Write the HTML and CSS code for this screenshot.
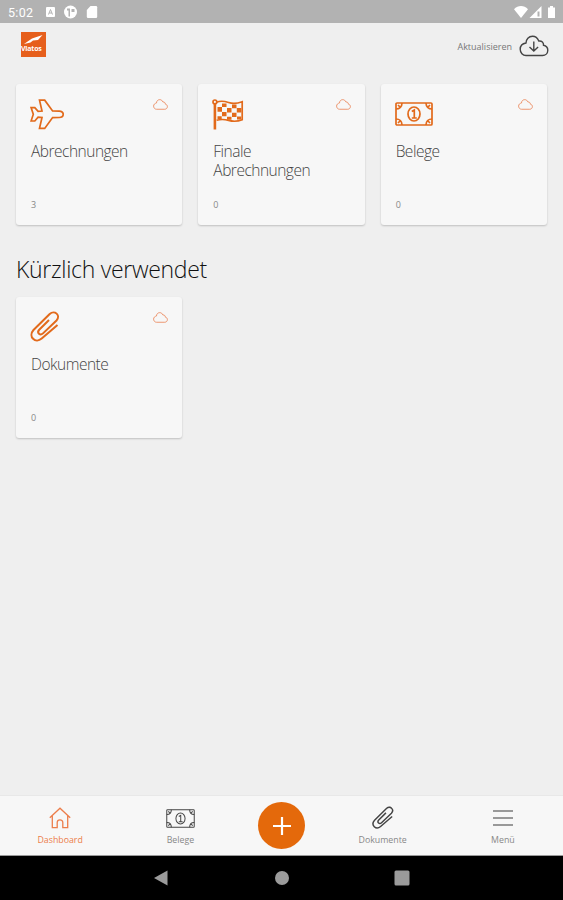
FILE: index.html
```html
<!DOCTYPE html>
<html lang="de">
<head>
  <meta charset="UTF-8">
  <meta name="viewport" content="width=device-width, initial-scale=1.0">
  <title>Dashboard</title>
  <link rel="stylesheet" href="styles.css">
</head>
<body>

  <svg class="sprite" width="0" height="0">
    <symbol id="cloud" viewBox="0 0 30 22">
      <path d="M7 20.5h16.5c3 0 5.300-2.300 5.300-5.200 0-2.800-1.700-4.600-4.300-5.100.3-2.700-1.700-4.600-4.700-4.200C18.600 3 16.400 1.300 13.500 1.300 9.800 1.300 7 4 7 8c-3.600.6-5.800 3.100-5.800 6.200 0 3.500 2.600 6.300 5.800 6.300z"/>
    </symbol>
    <symbol id="plane" viewBox="0 0 34 31">
      <path d="M33.200 15.300c0-2-1.700-3.100-4-3.200l-6.600-.1L14.700 1.200H9.500L12 12.100l-3.900.3-3.300-3.800H1.100l2.200 6.700L1.100 22h3.700l3.300-3.800 3.900.3-2.500 10.900h5.200L22.600 18.600l6.600-.1c2.300-.1 4-1.200 4-3.200z"/>
    </symbol>
    <symbol id="flag" viewBox="0 0 32 31">
      <circle cx="2.900" cy="2.900" r="1.900"/>
      <path class="pole" d="M2.900 5v25.500"/>
      <path d="M4.600 3.200c5-2 8-1 12 .3s8 1.200 13.600-.8v18c-5 2-9 2-13.600.7s-7-1.600-12-.1"/>
      <path class="fill" d="M10 4.500h4.500V8H10zM20 5.500h4.500v3.800H20zM5.500 8h4.500v4.800H5.500zM15 9h4.500v4.500H15zM24.800 9h4.500v4.500h-4.500zM10 13h4.500v4.200H10zM20 13.800h4.500V18H20zM5.500 17.200h4.200V20H5.500zM15 17.800h4.500v3H15zM25 17.500h4.200v3H25z"/>
    </symbol>
    <symbol id="money" viewBox="0 0 38 24">
      <rect x="1" y="1" width="36" height="22" rx="1"/>
      <path d="M7 1c0 3.500-2.400 6-6 6M31 1c0 3.500 2.400 6 6 6M7 23c0-3.500-2.400-6-6-6M31 23c0-3.500 2.400-6 6-6M3 3l2 2M35 3l-2 2M3 21l2-2M35 21l-2-2"/>
      <ellipse cx="19" cy="12" rx="6" ry="7"/>
      <path d="M16.800 9.500 19.300 8v7.800M16.800 16h5"/>
    </symbol>
    <symbol id="clip" viewBox="0 0 30 32">
      <path class="wire" d="M19 9 9.200 18.800c-2.800 3 .9 6.400 3.800 3.600L26.500 9.500c4.600-5.200-2-11-6.800-6.500L3.500 19c-5.800 6.600 2 14 8.200 8.600L27.500 14"/>
    </symbol>
  </svg>

  <div class="status-bar">
    <span class="time">5:02</span>
    <svg class="status-left" width="54" height="14" viewBox="0 0 54 14">
      <rect x="1" y="2" width="9" height="10" rx="1"/>
      <path class="cut-line" d="M3.500 9.500 5.500 4.500l2 5M4.300 8h2.500"/>
      <circle cx="25.500" cy="7" r="6.500"/>
      <path class="cut" d="M22 3.500h3v8h-1.500v-6H22zM26.500 4h3v3h-3z"/>
      <path d="M45.500 1H51a1.200 1.200 0 0 1 1.200 1.200v9.600A1.200 1.200 0 0 1 51 13h-8a1.200 1.200 0 0 1-1.200-1.200V5z"/>
    </svg>
    <svg class="status-right" width="42" height="14" viewBox="0 0 42 14">
      <path d="M0 4.200C4-.2 10-.2 14 4.200L7 13z"/>
      <path d="M27.500 1v12H15.500z"/>
      <path class="cut" d="M23.500 6.500h2v5h-2z"/>
      <path d="M36 1h3v1.500h2V13h-7V2.500h2z"/>
    </svg>
  </div>

  <header class="header">
    <div class="logo">
      <svg class="logo-bird" width="19" height="10" viewBox="0 0 19 10">
        <path d="M0 9 8 3.500 18.500 0 14 5 9 5.500 6.500 7.500z"/>
      </svg>
      <span class="logo-name">Viatos</span>
    </div>
    <div class="refresh">
      <span>Aktualisieren</span>
      <svg class="refresh-icon" width="30" height="22" viewBox="0 0 30 22">
        <use href="#cloud"/>
        <path d="M14.800 6.500v9.500M10.500 12l4.300 4 4.300-4"/>
      </svg>
    </div>
  </header>

  <main class="content">
    <section class="cards">
      <div class="card">
        <svg class="icon" width="34" height="31"><use href="#plane"/></svg>
        <svg class="sync" width="15" height="11"><use href="#cloud"/></svg>
        <h3>Abrechnungen</h3>
        <p class="count">3</p>
      </div>
      <div class="card">
        <svg class="icon" width="32" height="31"><use href="#flag"/></svg>
        <svg class="sync" width="15" height="11"><use href="#cloud"/></svg>
        <h3>Finale Abrechnungen</h3>
        <p class="count">0</p>
      </div>
      <div class="card">
        <svg class="icon" width="38" height="24"><use href="#money"/></svg>
        <svg class="sync" width="15" height="11"><use href="#cloud"/></svg>
        <h3>Belege</h3>
        <p class="count">0</p>
      </div>
    </section>

    <h2>Kürzlich verwendet</h2>

    <section class="cards">
      <div class="card">
        <svg class="icon" width="30" height="32"><use href="#clip"/></svg>
        <svg class="sync" width="15" height="11"><use href="#cloud"/></svg>
        <h3>Dokumente</h3>
        <p class="count">0</p>
      </div>
    </section>
  </main>

  <nav class="tabs">
    <a class="tab active">
      <svg width="22" height="22" viewBox="0 0 22 22"><path d="M.8 10.800 11 1.200l10.200 9.600M3.300 8.800v11.900h4.900v-5.200c0-3.600 5.600-3.600 5.600 0v5.200h4.900V8.800"/></svg>
      <span>Dashboard</span>
    </a>
    <a class="tab">
      <svg width="29" height="19" viewBox="0 0 38 24" preserveAspectRatio="none"><use href="#money"/></svg>
      <span>Belege</span>
    </a>
    <button class="add">
      <svg width="18" height="18" viewBox="0 0 18 18"><path d="M9 0v18M0 9h18"/></svg>
    </button>
    <a class="tab">
      <svg width="22" height="24" viewBox="0 0 30 32"><use href="#clip"/></svg>
      <span>Dokumente</span>
    </a>
    <a class="tab menu">
      <svg width="20" height="18" viewBox="0 0 20 18"><path d="M0 2h20M0 9h20M0 16h20"/></svg>
      <span>Menü</span>
    </a>
  </nav>

  <div class="system-bar">
    <svg width="16" height="16" viewBox="0 0 16 16"><path d="M0 8 13.500.5v15z"/></svg>
    <svg width="16" height="16" viewBox="0 0 16 16"><circle cx="8" cy="8" r="7"/></svg>
    <svg width="16" height="16" viewBox="0 0 16 16"><rect x=".5" y=".5" width="15" height="15" rx="1.500"/></svg>
  </div>

</body>
</html>
```
FILE: styles.css
```css
* {
  box-sizing: border-box;
}
body {
  margin: 0;
  height: 900px;
  display: flex;
  flex-direction: column;
  overflow: hidden;
  background-color: #efefef;
  color: #444;
  font-family: "Open Sans", "Noto Sans", sans-serif;
  font-weight: 300;
}
h2, h3, p {
  margin: 0;
  font-weight: 300;
}
svg {
  display: block;
  fill: none;
  stroke: currentColor;
}
.sprite {
  position: absolute;
}
.status-bar {
  height: 23px;
  display: flex;
  align-items: center;
  padding: 1px 7px 0 8px;
  background-color: #b2b2b2;
  color: #fff;
}
.status-bar svg {
  fill: #fff;
  stroke: none;
}
.status-bar .cut {
  fill: #b2b2b2;
}
.status-bar .cut-line {
  fill: none;
  stroke: #b2b2b2;
}
.time {
  width: 37px;
  font-family: Roboto, sans-serif;
  font-weight: 400;
  font-size: 12.5px;
  letter-spacing: 0.3px;
}
.status-right {
  margin-left: auto;
}
.header {
  height: 61px;
  display: flex;
  justify-content: space-between;
  align-items: flex-start;
  padding: 9px 14px 0 21px;
}
.logo {
  width: 25px;
  height: 25px;
  display: flex;
  flex-direction: column;
  background-color: #e65f1c;
  color: #fff;
}
.logo-bird {
  margin: 3px 0 0 3px;
  fill: #fff;
  stroke: none;
}
.logo-name {
  font-size: 7px;
  font-weight: 700;
  line-height: 7px;
  letter-spacing: -0.2px;
}
.refresh {
  display: flex;
  align-items: center;
  gap: 7px;
  margin-top: 3px;
  font-size: 9px;
  font-weight: 400;
  color: #777;
}
.refresh-icon {
  color: #444;
  stroke-width: 1.4;
}
.content {
  flex: 1;
  padding: 0 16px;
}
.cards {
  display: grid;
  grid-template-columns: repeat(3, 1fr);
  gap: 16px;
}
.card {
  height: 141px;
  display: grid;
  grid-template-columns: 1fr 15px;
  grid-template-rows: 30px 1fr 14px;
  row-gap: 13px;
  padding: 15px 14px 13px 15px;
  border-radius: 3px;
  background-color: #f7f7f7;
  box-shadow: 0 1px 2px rgba(0, 0, 0, 0.2);
}
.icon {
  align-self: center;
  margin-left: -1px;
  color: #e26a1b;
  stroke-width: 1.7;
}
.fill {
  fill: currentColor;
  stroke: none;
}
.pole {
  stroke-width: 2.6;
}
.wire {
  stroke-width: 2;
}
.sync {
  color: #eb8c62;
  stroke-width: 1.8;
}
.card h3 {
  grid-column: 1 / 3;
  font-size: 15.5px;
  font-weight: 350;
  line-height: 19px;
  letter-spacing: -0.5px;
}
.count {
  grid-column: 1 / 3;
  font-size: 9px;
  font-weight: 400;
  line-height: 14px;
  color: #888;
}
h2 {
  height: 72px;
  padding-top: 28px;
  font-size: 23px;
  line-height: 32px;
  letter-spacing: -0.3px;
  color: #111;
}
.tabs {
  height: 61px;
  display: flex;
  border-top: 1px solid #e8e8e8;
  border-bottom: 1px solid #999;
  background-color: #f7f7f7;
}
.tab {
  flex: 1;
  display: flex;
  flex-direction: column;
  align-items: center;
  padding-top: 6px;
  font-size: 8.8px;
  font-weight: 400;
  line-height: 12px;
  color: #888;
}
.tab svg {
  margin: auto 0;
  color: #444;
  stroke-width: 1.3;
}
.tab span {
  margin-bottom: 9px;
}
.tab.active, .tab.active svg {
  color: #ec7d4a;
}
.tab.menu svg {
  color: #999;
  stroke-width: 2.2;
}
.add {
  width: 47px;
  height: 47px;
  display: flex;
  justify-content: center;
  align-items: center;
  margin: 6px 17.5px 0;
  padding: 0;
  border: none;
  border-radius: 50%;
  background-color: #e4690b;
  color: #fff;
}
.add svg {
  stroke-width: 2.2;
}
.system-bar {
  height: 44px;
  display: flex;
  justify-content: center;
  align-items: center;
  gap: 104px;
  background-color: #000;
}
.system-bar svg {
  fill: #9b9b9b;
  stroke: none;
}
```
